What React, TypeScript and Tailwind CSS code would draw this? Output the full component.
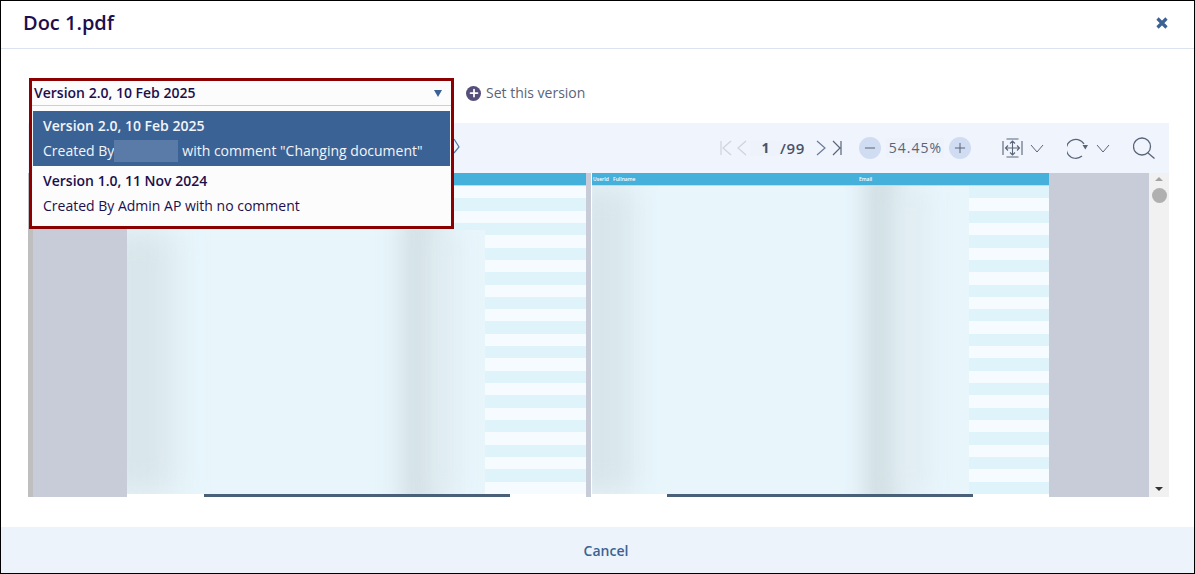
import { Minus, Plus } from "lucide-react";

const font = { fontFamily: '"Open Sans", "Noto Sans", sans-serif' };

const PageRows = ({ startCyan }: { startCyan: boolean }) => (
  <>
    {Array.from({ length: 25 }).map((_, i) => {
      const cyan = i % 2 === 0 ? startCyan : !startCyan;
      return <div key={i} className={`h-[12.32px] ${cyan ? "bg-[#def4fa]" : "bg-[#f5fbfe]"}`} />;
    })}
  </>
);

const SmallChevron = ({ className }: { className: string }) => (
  <svg className={`h-[9px] w-[14px] ${className}`} viewBox="0 0 14 9" fill="none" stroke="currentColor" strokeWidth="1">
    <path d="M1 1l6 7 6-7" />
  </svg>
);

const Toolbar = () => (
  <div className="flex h-[50px] items-center bg-[#f0f4fc] text-[#5a6478]">
    <svg className="ml-[422px] mt-[-4px] h-5 w-5 text-[#4c78ac]" viewBox="0 0 20 20" fill="none" stroke="currentColor" strokeWidth="1.2">
      <path d="M4 3l5 8-5 6" />
    </svg>
    <svg className="ml-[250px] h-4 w-3 text-[#d0d3da]" viewBox="0 0 12 16" fill="none" stroke="currentColor" strokeWidth="1.2">
      <path d="M1 1v14M11 1L3 8l8 7" />
    </svg>
    <svg className="ml-[5px] h-4 w-[10px] text-[#d0d3da]" viewBox="0 0 10 16" fill="none" stroke="currentColor" strokeWidth="1.2">
      <path d="M9 1L1 8l8 7" />
    </svg>
    <div className="ml-[3px] flex h-[15px] w-[31px] items-center justify-center bg-[#edf2fb] text-sm font-bold leading-none text-[#4a5268]">
      1
    </div>
    <span className="ml-[-1px] w-[28px] whitespace-nowrap text-[15px] font-semibold tracking-[0.6px] text-[#4a5268]">/99</span>
    <svg className="ml-[8px] h-4 w-[10px] text-[#6a7a9a]" viewBox="0 0 10 16" fill="none" stroke="currentColor" strokeWidth="1.2">
      <path d="M1 1l8 7-8 7" />
    </svg>
    <svg className="ml-[6px] h-4 w-[10px]" viewBox="0 0 10 16" fill="none" stroke="currentColor" strokeWidth="1.2">
      <path d="M1 1l7 7-7 7M9 1v14" />
    </svg>
    <div className="ml-[17px] flex h-[22px] w-[22px] items-center justify-center rounded-full bg-[#d0dcf2]">
      <Minus className="h-4 w-4" strokeWidth={1.5} />
    </div>
    <div className="ml-[5px] flex h-[20px] w-[58px] items-center justify-center bg-[#edf2fb] pl-[1px] text-sm font-medium tracking-[1px] text-[#5a6478]">
      54.45%
    </div>
    <div className="ml-[5px] flex h-[22px] w-[22px] items-center justify-center rounded-full bg-[#d0dcf2]">
      <Plus className="h-4 w-4" strokeWidth={1.5} />
    </div>
    <svg className="ml-[31px] h-5 w-[21px]" viewBox="0 0 21 20" fill="none" stroke="currentColor" strokeWidth="1.1">
      <path d="M1 3v14M20 3v14M4.500 1h12M4.500 19h12M10.500 3v14M3.500 10h14M8 5.500l2.500-2.500 2.500 2.500M8 14.500l2.500 2.500 2.500-2.500M6 7.500L3.500 10 6 12.500M15 7.500l2.500 2.500-2.500 2.500" />
    </svg>
    <SmallChevron className="ml-[7px]" />
    <svg className="ml-[23px] h-[22px] w-[22px]" viewBox="0 0 22 22" fill="none" stroke="currentColor" strokeWidth="1.2">
      <path d="M17 7A9.500 9.500 0 1 0 15 19" />
      <path d="M15.500 8h5.500l-2.700 4.500z" fill="currentColor" stroke="none" />
    </svg>
    <SmallChevron className="ml-[7px]" />
    <svg className="ml-[23px] h-[22px] w-[22px]" viewBox="0 0 22 22" fill="none" stroke="currentColor" strokeWidth="1.3">
      <circle cx="9" cy="9.500" r="8.500" />
      <path d="M15 16l6.500 5.500" />
    </svg>
  </div>
);

const Viewer = () => (
  <div className="flex h-[324px] bg-[#c8ccd8]">
    <div className="w-[5px] bg-[#bfbfbf]" />
    <div className="relative ml-[94px] flex w-[459px] flex-col bg-white">
      <div className="h-[13px] border-b border-[#b6e0f0] bg-[#45b0da]" />
      <PageRows startCyan={false} />
      <div className="absolute left-0 top-[57px] h-[264px] w-[358px] overflow-hidden bg-[#e8f6fc]">
        <div className="absolute left-[-20px] top-0 h-full w-[65px] bg-[#d8e5ea] blur-[16px]" />
        <div className="absolute left-[274px] top-[-20px] h-[304px] w-[38px] bg-[#d3e0e5] blur-[12px]" />
        <div className="absolute left-[305px] top-0 h-full w-[25px] bg-[#e0ecf1] blur-[12px]" />
      </div>
      <div className="absolute bottom-0 left-[77px] h-[3px] w-[306px] bg-[#4a6078]" />
    </div>
    <div className="relative ml-[5px] flex w-[458px] flex-col border-l border-white bg-white">
      <div className="relative h-[13px] border-b border-[#b6e0f0] bg-[#45b0da] text-[5px] font-semibold leading-[12px] text-white">
        <span className="absolute left-[1px]">UserId</span>
        <span className="absolute left-[21px]">Fullname</span>
        <span className="absolute left-[267px]">Email</span>
      </div>
      <PageRows startCyan={true} />
      <div className="absolute left-0 top-[13px] h-[308px] w-[377px] overflow-hidden bg-[#e8f6fc]">
        <div className="absolute left-[-20px] top-0 h-full w-[60px] bg-[#d8e5ea] blur-[14px]" />
        <div className="absolute left-[271px] top-[-20px] h-[348px] w-[38px] bg-[#d3e0e5] blur-[10px]" />
        <div className="absolute left-[305px] top-0 h-full w-[30px] bg-[#e0ecf1] blur-[12px]" />
      </div>
      <div className="absolute bottom-0 left-[75px] h-[3px] w-[306px] bg-[#4a6078]" />
    </div>
    <div className="ml-auto flex w-5 flex-col items-center bg-[#f1f1f1] pt-[4px]">
      <div className="h-0 w-0 border-x-4 border-b-4 border-x-transparent border-b-[#a3a3a3]" />
      <div className="mt-[7px] h-[15px] w-[15px] rounded-full bg-[#b0b0b0]" />
      <div className="mb-[6px] mt-auto h-0 w-0 border-x-4 border-t-4 border-x-transparent border-t-[#333]" />
    </div>
  </div>
);

const VersionSelect = () => (
  <div className="absolute left-[1px] top-0 z-10 w-[425px] border-[3px] border-[#8b0000] bg-[#fcfcfc] text-sm text-[#1b0f4d]">
    <div className="flex h-[25px] items-center justify-between border-b border-[#cfcfcf] pl-[2px] pr-[9px] font-semibold">
      <span>Version 2.0, 10 Feb 2025</span>
      <div className="h-0 w-0 border-x-[4px] border-t-[7px] border-x-transparent border-t-[#3b6294]" />
    </div>
    <div className="px-[1px] py-[5px]">
      <div className="flex h-[55px] flex-col gap-[6px] bg-[#3b6294] pl-[10px] pt-[5px] text-[#f2f5fa]">
        <div className="font-semibold leading-[19px]">Version 2.0, 10 Feb 2025</div>
        <div className="flex h-[19px] items-center">
          Created By
          <span className="h-[22px] w-[64px] bg-[#5a7ba8]" />
          <span className="ml-1">with comment "Changing document"</span>
        </div>
      </div>
      <div className="flex h-[55px] flex-col gap-[6px] pl-[10px] pt-[5px]">
        <div className="font-semibold leading-[19px]">Version 1.0, 11 Nov 2024</div>
        <div className="leading-[19px]">Created By Admin AP with no comment</div>
      </div>
    </div>
  </div>
);

export default function App() {
  return (
    <div className="flex h-[574px] w-[1195px] flex-col border border-black bg-white" style={font}>
      <div className="flex h-[48px] shrink-0 items-center justify-between border-b border-[#dbe3f1] pb-[4px] pl-[22px] pr-[26px]">
        <h1 className="text-xl font-semibold text-[#1b0f4d]">Doc 1.pdf</h1>
        <svg className="h-3 w-3 text-[#3b6294]" viewBox="0 0 12 12" fill="none" stroke="currentColor" strokeWidth="3.2">
          <path d="M1.500 1.500l9 9M10.500 1.500l-9 9" />
        </svg>
      </div>
      <div className="relative flex-1 pl-[27px] pr-[25px] pt-[29px]">
        <div className="relative flex h-[45px] items-start">
          <VersionSelect />
          <div className="ml-[438px] mt-[5px] flex items-center gap-[5px] text-sm text-[#5a6478]">
            <div className="flex h-[15px] w-[15px] items-center justify-center rounded-full bg-[#564f7a]">
              <Plus className="h-3 w-3 text-white" strokeWidth={3.5} />
            </div>
            Set this version
          </div>
        </div>
        <Toolbar />
        <Viewer />
      </div>
      <div className="flex h-[46px] shrink-0 items-center justify-center bg-[#ecf3fa] pl-[17px] pt-[2px] text-sm font-semibold text-[#3b6294]">
        Cancel
      </div>
    </div>
  );
}
